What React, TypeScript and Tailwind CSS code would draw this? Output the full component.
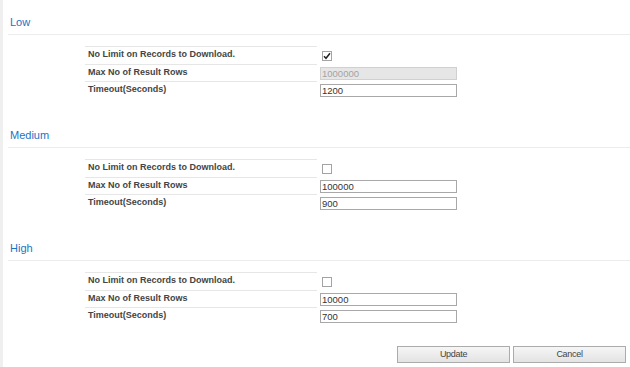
import React from "react";

type Cfg = {
  title: string;
  checked: boolean;
  rows: string;
  timeout: string;
};

const sections: Cfg[] = [
  { title: "Low", checked: true, rows: "1000000", timeout: "1200" },
  { title: "Medium", checked: false, rows: "100000", timeout: "900" },
  { title: "High", checked: false, rows: "10000", timeout: "700" },
];

function Checkbox({ checked }: { checked: boolean }) {
  return (
    <div className="mt-[5px] ml-[2px] w-[10px] h-[10px] border border-[#a3a3a3] bg-white flex items-center justify-center">
      {checked && (
        <svg width="8" height="8" viewBox="0 0 8 8">
          <path d="M1 4.2 L3 6.3 L7 1.2" stroke="#222" strokeWidth="1.5" fill="none" />
        </svg>
      )}
    </div>
  );
}

function TextBox({ value, disabled }: { value: string; disabled?: boolean }) {
  return (
    <input
      readOnly
      value={value}
      disabled={disabled}
      className={
        "mt-[3px] block w-[137px] h-[13px] border px-[1px] text-[9.5px] leading-[11px] outline-none font-['Liberation_Sans',Arial,sans-serif] " +
        (disabled
          ? "bg-[#e6e6e6] border-[#d0d0d0] text-[#a3a3a3]"
          : "bg-white border-[#a8a8a8] text-[#333]")
      }
    />
  );
}

function Label({ text, h }: { text: string; h: string }) {
  return (
    <div
      className={
        "w-[232px] border-t border-[#e6e6e6] pl-[3px] pt-[1px] text-[9px] leading-[12px] font-bold text-[#444] " +
        h
      }
    >
      {text}
    </div>
  );
}

function Section({ cfg }: { cfg: Cfg }) {
  return (
    <div className="h-[113px] pt-[11px]">
      <div className="h-[24px] border-b border-[#ececec] pl-[2px] text-[11px] leading-[23px] text-[#1a73c4]">
        {cfg.title}
      </div>
      <div className="mt-[11px] ml-[77px] flex flex-col">
        <div className="flex">
          <Label text="No Limit on Records to Download." h="h-[18px]" />
          <div className="pl-[3px]">
            <Checkbox checked={cfg.checked} />
          </div>
        </div>
        <div className="flex">
          <Label text="Max No of Result Rows" h="h-[17px]" />
          <div className="pl-[3px]">
            <TextBox value={cfg.rows} disabled={cfg.checked} />
          </div>
        </div>
        <div className="flex">
          <Label text="Timeout(Seconds)" h="h-[17px]" />
          <div className="pl-[3px]">
            <TextBox value={cfg.timeout} />
          </div>
        </div>
      </div>
    </div>
  );
}

export default function App() {
  return (
    <div className="w-[630px] h-[367px] flex bg-white overflow-hidden font-['Liberation_Sans',Arial,sans-serif]">
      <div className="w-[3px] h-full bg-[#efefef] shrink-0" />
      <div className="flex-1 pl-[5px]">
        {sections.map((s) => (
          <Section key={s.title} cfg={s} />
        ))}
        <div className="mt-[7px] flex justify-end gap-[3px] pr-[4px]">
          <button className="w-[113px] h-[17px] border border-[#ababab] bg-gradient-to-b from-[#f6f6f6] to-[#e3e3e3] text-[9px] leading-[15px] tracking-[-0.3px] text-[#444]">
            Update
          </button>
          <button className="w-[113px] h-[17px] border border-[#ababab] bg-gradient-to-b from-[#f6f6f6] to-[#e3e3e3] text-[9px] leading-[15px] tracking-[-0.3px] text-[#444]">
            Cancel
          </button>
        </div>
      </div>
    </div>
  );
}
